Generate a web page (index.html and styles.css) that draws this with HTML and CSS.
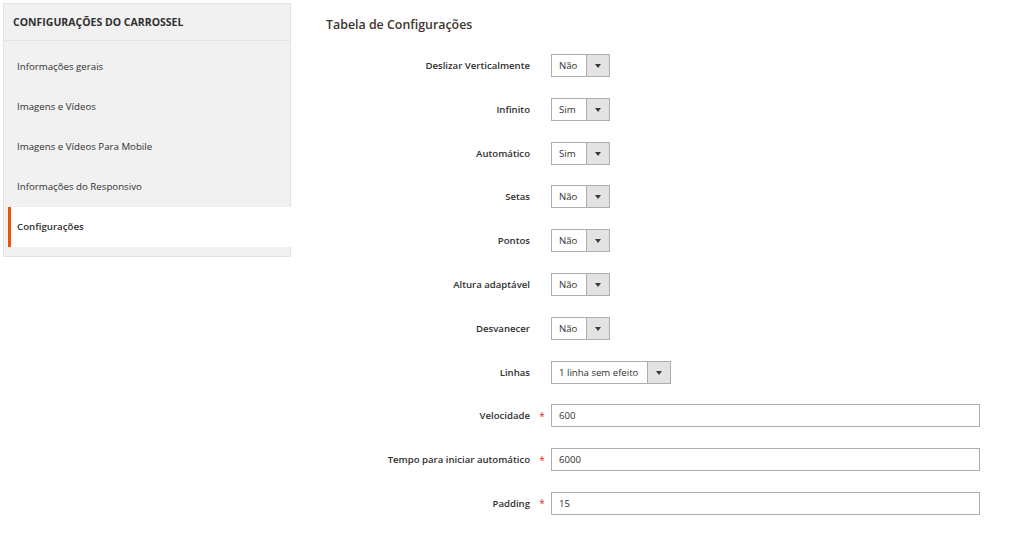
FILE: index.html
```html
<!DOCTYPE html>
<html lang="pt">
<head>
<meta charset="utf-8">
<link rel="stylesheet" href="styles.css">
</head>
<body>
<div class="page">
  <aside class="nav">
    <div class="nav-title">Configurações do Carrossel</div>
    <ul class="nav-items">
      <li class="nav-item">Informações gerais</li>
      <li class="nav-item">Imagens e Vídeos</li>
      <li class="nav-item">Imagens e Vídeos Para Mobile</li>
      <li class="nav-item">Informações do Responsivo</li>
      <li class="nav-item active">Configurações</li>
    </ul>
  </aside>
  <main class="main">
    <h2 class="legend">Tabela de Configurações</h2>
    <div class="form">
      <div class="row"><label class="label">Deslizar Verticalmente</label><span class="req"></span><div class="select"><span class="val">Não</span><span class="arrow"></span></div></div>
      <div class="row"><label class="label">Infinito</label><span class="req"></span><div class="select"><span class="val">Sim</span><span class="arrow"></span></div></div>
      <div class="row"><label class="label">Automático</label><span class="req"></span><div class="select"><span class="val">Sim</span><span class="arrow"></span></div></div>
      <div class="row"><label class="label">Setas</label><span class="req"></span><div class="select"><span class="val">Não</span><span class="arrow"></span></div></div>
      <div class="row"><label class="label">Pontos</label><span class="req"></span><div class="select"><span class="val">Não</span><span class="arrow"></span></div></div>
      <div class="row"><label class="label">Altura adaptável</label><span class="req"></span><div class="select"><span class="val">Não</span><span class="arrow"></span></div></div>
      <div class="row"><label class="label">Desvanecer</label><span class="req"></span><div class="select"><span class="val">Não</span><span class="arrow"></span></div></div>
      <div class="row"><label class="label">Linhas</label><span class="req"></span><div class="select wide"><span class="val">1 linha sem efeito</span><span class="arrow"></span></div></div>
      <div class="row"><label class="label">Velocidade</label><span class="req">*</span><div class="input">600</div></div>
      <div class="row"><label class="label">Tempo para iniciar automático</label><span class="req">*</span><div class="input">6000</div></div>
      <div class="row"><label class="label">Padding</label><span class="req">*</span><div class="input">15</div></div>
    </div>
  </main>
</div>
</body>
</html>
```
FILE: styles.css
```css
* { box-sizing: border-box; }
html, body { margin: 0; padding: 0; background: #fff; }
body {
  font-family: "Open Sans", "Noto Sans", sans-serif;
  color: #303030;
  font-size: 9.6px;
}
.page {
  display: flex;
  align-items: flex-start;
  padding: 3px 0 0 3px;
}
.nav {
  width: 288px;
  flex: none;
  background: #f1f1f1;
  border: 1px solid #e3e3e3;
  padding-bottom: 9px;
}
.nav-title {
  height: 37px;
  line-height: 36px;
  padding-left: 9px;
  font-weight: 700;
  text-transform: uppercase;
  font-size: 10.5px;
  color: #303030;
  border-bottom: 1px solid #e3e3e3;
}
.nav-items {
  list-style: none;
  margin: 0;
  padding: 6px 0 0 0;
}
.nav-item {
  height: 40px;
  line-height: 40px;
  margin-left: 4px;
  padding-left: 6px;
  border-left: 3px solid transparent;
  color: #303030;
  font-size: 9.7px;
}
.nav-item.active {
  background: #fff;
  border-left-color: #eb5202;
  font-weight: 600;
  margin-right: -1px;
}
.main {
  flex: 1;
  padding-left: 35px;
}
.legend {
  margin: 12px 0 0 0;
  font-size: 12.4px;
  font-weight: 600;
  color: #41362f;
  line-height: 20px;
}
.form {
  margin-top: 19px;
  display: flex;
  flex-direction: column;
  gap: 20.8px;
  padding-right: 44px;
}
.row {
  display: grid;
  grid-template-columns: 204px 21px 1fr;
  align-items: center;
  height: 23px;
}
.label {
  text-align: right;
  font-weight: 600;
  font-size: 9.6px;
  color: #303030;
}
.req {
  color: #e22626;
  font-size: 10px;
  text-align: center;
  padding-left: 3px;
}
.select {
  width: 59px;
  height: 23px;
  border: 1px solid #adadad;
  display: flex;
  background: #fff;
}
.select.wide { width: 120px; }
.val {
  flex: 1;
  padding-left: 7px;
  line-height: 21px;
  font-size: 9.6px;
  color: #303030;
}
.arrow {
  width: 23px;
  background: #e3e3e3;
  border-left: 1px solid #adadad;
  position: relative;
}
.arrow::after {
  content: "";
  position: absolute;
  left: 8px;
  top: 9px;
  border-left: 3px solid transparent;
  border-right: 3px solid transparent;
  border-top: 4px solid #41362f;
}
.input {
  height: 23px;
  border: 1px solid #adadad;
  padding-left: 7px;
  line-height: 21px;
  font-size: 9.6px;
  color: #303030;
}
```
